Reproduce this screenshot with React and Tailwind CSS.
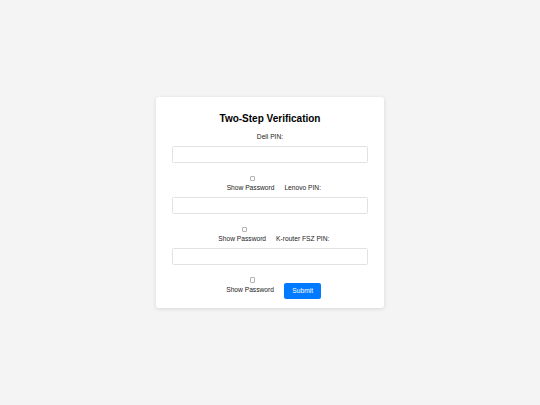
import React from "react";

function PinInput() {
  return (
    <input
      type="password"
      className="block w-full h-[16.7px] bg-white border border-[#e2e2e2] rounded-[1.5px] outline-none"
    />
  );
}

function Check() {
  return (
    <input
      type="checkbox"
      className="appearance-none block ml-[23.3px] w-[5.4px] h-[5.4px] border border-[#b3b3b3] rounded-[1px] bg-white"
    />
  );
}

function ShowCol({ extra = "" }) {
  return (
    <div className={"flex flex-col items-start " + extra}>
      <Check />
      <span className="mt-[3.4px] leading-[8px] whitespace-nowrap">Show Password</span>
    </div>
  );
}

export default function App() {
  return (
    <div className="min-h-screen h-[405px] bg-[#f4f4f4] flex items-center justify-center font-['Liberation_Sans',Arial,sans-serif]">
      <div className="w-[228px] bg-white rounded-[3px] shadow-[0_1px_4px_rgba(0,0,0,0.12)] px-[16px] pt-[15.4px] pb-[9.1px] text-center text-[6.67px] text-[#222]">
        <h2 className="text-[10px] leading-[12px] font-bold text-black">Two-Step Verification</h2>
        <label className="block mt-[8.8px] leading-[8px]">Dell PIN:</label>
        <div className="mt-[4.5px]">
          <PinInput />
        </div>
        <div className="mt-[13px] flex items-end justify-center pl-[7.7px] gap-[10px]">
          <ShowCol />
          <span className="leading-[8px] whitespace-nowrap">Lenovo PIN:</span>
        </div>
        <div className="mt-[4.8px]">
          <PinInput />
        </div>
        <div className="mt-[12.7px] flex items-end justify-center pl-[7.7px] gap-[10px]">
          <ShowCol />
          <span className="leading-[8px] whitespace-nowrap">K-router FSZ PIN:</span>
        </div>
        <div className="mt-[5.1px]">
          <PinInput />
        </div>
        <div className="mt-[12.3px] flex items-end justify-center pl-[7.7px] gap-[10px]">
          <ShowCol extra="pb-[4.5px]" />
          <button className="h-[16px] px-[8.4px] bg-[#007bff] text-white rounded-[2px] leading-[8px] text-[6.67px]">
            Submit
          </button>
        </div>
      </div>
    </div>
  );
}
